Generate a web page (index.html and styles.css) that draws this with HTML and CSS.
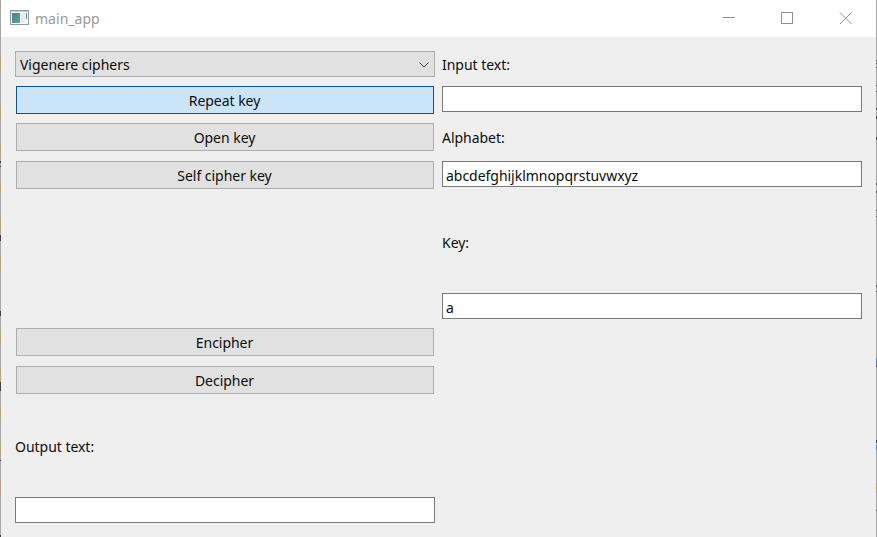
FILE: index.html
```html
<!DOCTYPE html>
<html lang="en">
<head>
<meta charset="utf-8">
<title>main_app</title>
<link rel="stylesheet" href="styles.css">
</head>
<body>
<div class="window">
  <header class="titlebar">
    <svg class="app-icon" width="19" height="16" viewBox="0 0 19 16">
      <defs><linearGradient id="g" x1="0" y1="0" x2="1" y2="1"><stop offset="0" stop-color="#4d789f"/><stop offset="1" stop-color="#56ae83"/></linearGradient></defs>
      <rect x=".5" y=".5" width="18" height="14" fill="#f7f7f7" stroke="#8f9b9c"/>
      <path d="M1 1.5h17" stroke="#c5cdcd"/>
      <rect x="2" y="3" width="8" height="10" fill="url(#g)"/>
      <rect x="11" y="3" width="4" height="10" fill="#e8eaeb"/>
      <rect x="16" y="3" width="1" height="6" fill="#539281"/>
    </svg>
    <span class="title">main_app</span>
    <svg class="controls" width="130" height="14" viewBox="0 0 130 14" fill="none" stroke="#8f8f8f">
      <path d="M0 5.5h12"/>
      <rect x="58.500" y="0.500" width="11" height="11"/>
      <path d="M117 .5l11.500 11.500M128.500 .5L117 12"/>
    </svg>
  </header>
  <main class="content">
    <section class="column">
      <div class="combo"><span>Vigenere ciphers</span>
        <svg width="10" height="6" viewBox="0 0 10 6" fill="none" stroke="#444"><path d="M.5.5L5 5 9.500.5"/></svg>
      </div>
      <button class="button selected">Repeat key</button>
      <button class="button">Open key</button>
      <button class="button self">Self cipher key</button>
      <button class="button encipher">Encipher</button>
      <button class="button decipher">Decipher</button>
      <label class="label output-label">Output text:</label>
      <div class="field output"></div>
    </section>
    <section class="column">
      <label class="label input-label">Input text:</label>
      <div class="field input"></div>
      <label class="label alphabet-label">Alphabet:</label>
      <div class="field alphabet">abcdefghijklmnopqrstuvwxyz</div>
      <label class="label key-label">Key:</label>
      <div class="field key">a</div>
    </section>
  </main>
</div>
</body>
</html>
```
FILE: styles.css
```css
* { box-sizing: border-box; }
body { margin: 0; background: #efefef; }
.window {
  position: relative;
  width: 877px; height: 537px; overflow: hidden;
  padding: 0 1px;
  background: #efefef; color: #0c0c0c;
  font: 14px/20px "Noto Sans", sans-serif; letter-spacing: -0.03px;
}
/* Window edges, with the desktop behind showing through */
.window::before, .window::after {
  content: ""; position: absolute; top: 0; bottom: 0; width: 1px;
  background-color: #a6a6a6; background-repeat: no-repeat;
}
.window::before {
  left: 0;
  --sand: linear-gradient(#b5a37e, #b5a37e);
  --dark: linear-gradient(#3f414f, #3f414f);
  background-image: var(--sand), var(--sand), var(--sand), var(--sand), var(--sand), var(--sand), var(--sand), var(--sand), var(--sand), var(--sand), var(--sand), var(--dark), var(--dark), var(--dark), var(--dark), var(--dark), var(--dark), var(--dark);
  background-size: 1px 14px, 1px 14px, 1px 14px, 1px 14px, 1px 14px, 1px 14px, 1px 14px, 1px 14px, 1px 14px, 1px 14px, 1px 14px, 1px 2px, 1px 1px, 1px 6px, 1px 5px, 1px 9px, 1px 1px, 1px 2px;
  background-position: 0 56px, 0 106px, 0 181px, 0 256px, 0 331px, 0 368px, 0 406px, 0 443px, 0 481px, 0 143px, 0 218px, 0 161px, 0 166px, 0 235px, 0 311px, 0 382px, 0 460px, 0 535px;
}
.window::after {
  right: 0;
  --dark: linear-gradient(#4a4e57, #4a4e57);
  --blue: linear-gradient(#5482a8, #5482a8);
  --sand: linear-gradient(#b09a7c, #b09a7c);
  background-image: var(--dark), var(--dark), var(--dark), var(--dark), var(--dark), var(--dark), var(--dark), var(--dark), var(--dark), var(--dark), var(--dark), var(--dark), var(--dark), var(--dark), var(--dark), var(--dark), var(--blue), var(--dark), var(--blue), var(--sand), var(--dark);
  background-size: 1px 1px, 1px 1px, 1px 1px, 1px 1px, 1px 1px, 1px 2px, 1px 3px, 1px 2px, 1px 2px, 1px 2px, 1px 2px, 1px 1px, 1px 1px, 1px 2px, 1px 1px, 1px 2px, 1px 8px, 1px 3px, 1px 5px, 1px 10px, 1px 1px;
  background-position: 0 60px, 0 63px, 0 67px, 0 85px, 0 91px, 0 108px, 0 116px, 0 137px, 0 183px, 0 191px, 0 138px, 0 210px, 0 216px, 0 285px, 0 291px, 0 365px, 0 358px, 0 440px, 0 445px, 0 483px, 0 510px;
}
.titlebar { height: 37px; background: #fff; display: flex; align-items: flex-start; padding: 10px 17px 0 9px; }
.title { margin: -1px 0 0 6px; color: #999; letter-spacing: 0.03px; }
.controls { margin: 2px 6px 0 auto; }
.content { display: flex; gap: 7px; padding: 14px 14px 0; }
.column { width: 420px; display: flex; flex-direction: column; }
.combo {
  height: 26px; border: 1px solid #adadad; background: #e1e1e1;
  display: flex; align-items: center; justify-content: space-between; padding: 1px 5px 0 4px;
}
.button {
  height: 28px; margin: 9px 1px 0; padding: 1px 1px 0 0; border: 1px solid #adadad;
  border-radius: 0; background: #e1e1e1; color: inherit; font: inherit; letter-spacing: inherit;
}
.selected { background: #cce4f7; border-color: #10568b; }
.self, .decipher { margin-top: 10px; }
.encipher { margin-top: 139px; }
.label { height: 20px; }
.field { height: 26px; border: 1px solid #7a7a7a; background: #fff; padding: 4px 3px 0; }
.output-label { margin-top: 43px; }
.output { margin-top: 40px; }
.input-label { margin-top: 4px; }
.input { margin-top: 11px; }
.alphabet-label { margin-top: 16px; }
.alphabet { margin-top: 13px; }
.key-label { margin-top: 46px; }
.key { margin-top: 40px; }
```
